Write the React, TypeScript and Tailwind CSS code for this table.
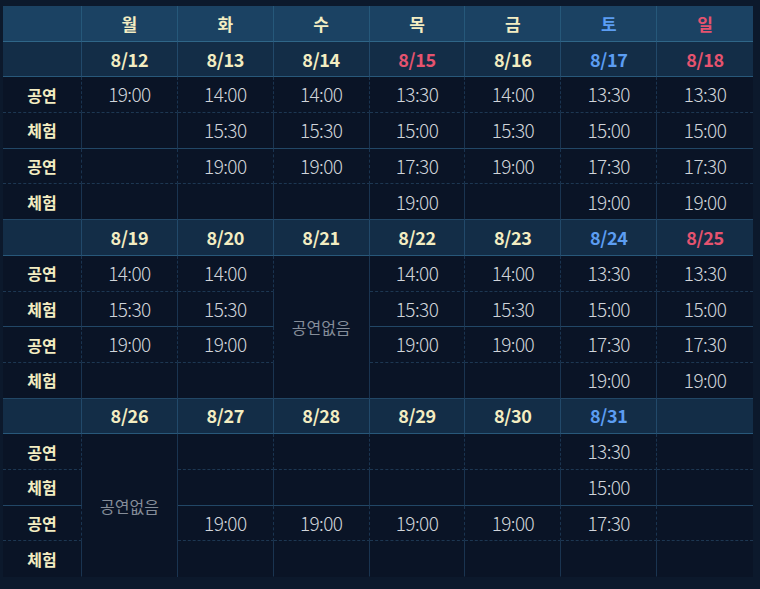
import React from 'react'

type Tone = 'cream' | 'blue' | 'red'

const toneClass: Record<Tone, string> = {
  cream: 'text-[#f3edc2]',
  blue: 'text-[#5c9df2]',
  red: 'text-[#e5536f]',
}

const days: [string, Tone][] = [
  ['월', 'cream'],
  ['화', 'cream'],
  ['수', 'cream'],
  ['목', 'cream'],
  ['금', 'cream'],
  ['토', 'blue'],
  ['일', 'red'],
]

const labels = ['공연', '체험', '공연', '체험']

// closedCol = column merged into one "공연없음" cell over all four rows
interface Block {
  dates: [string, Tone][]
  closedCol?: number
  rows: string[][]
}

const blocks: Block[] = [
  {
    dates: [
      ['8/12', 'cream'],
      ['8/13', 'cream'],
      ['8/14', 'cream'],
      ['8/15', 'red'],
      ['8/16', 'cream'],
      ['8/17', 'blue'],
      ['8/18', 'red'],
    ],
    rows: [
      ['19:00', '14:00', '14:00', '13:30', '14:00', '13:30', '13:30'],
      ['', '15:30', '15:30', '15:00', '15:30', '15:00', '15:00'],
      ['', '19:00', '19:00', '17:30', '19:00', '17:30', '17:30'],
      ['', '', '', '19:00', '', '19:00', '19:00'],
    ],
  },
  {
    dates: [
      ['8/19', 'cream'],
      ['8/20', 'cream'],
      ['8/21', 'cream'],
      ['8/22', 'cream'],
      ['8/23', 'cream'],
      ['8/24', 'blue'],
      ['8/25', 'red'],
    ],
    closedCol: 2,
    rows: [
      ['14:00', '14:00', '', '14:00', '14:00', '13:30', '13:30'],
      ['15:30', '15:30', '', '15:30', '15:30', '15:00', '15:00'],
      ['19:00', '19:00', '', '19:00', '19:00', '17:30', '17:30'],
      ['', '', '', '', '', '19:00', '19:00'],
    ],
  },
  {
    dates: [
      ['8/26', 'cream'],
      ['8/27', 'cream'],
      ['8/28', 'cream'],
      ['8/29', 'cream'],
      ['8/30', 'cream'],
      ['8/31', 'blue'],
      ['', 'cream'],
    ],
    closedCol: 0,
    rows: [
      ['', '', '', '', '', '13:30', ''],
      ['', '', '', '', '', '15:00', ''],
      ['', '19:00', '19:00', '19:00', '19:00', '17:30', ''],
      ['', '', '', '', '', '', ''],
    ],
  },
]

const font = { fontFamily: '"Noto Sans CJK KR", "Noto Sans", sans-serif' }

function rowBorder(r: number, last: boolean) {
  if (last) return 'border-b border-transparent'
  if (r % 2 === 0) return 'border-b border-dashed border-[#1d3752]'
  return 'border-b border-solid border-[#224766]'
}

export default function App() {
  return (
    <div className="w-[760px] h-[589px] bg-[#0c192c] pt-[6px] pl-[3px]" style={font}>
      <div className="grid w-[750px] h-[571px] grid-cols-[79px_repeat(7,minmax(0,1fr))] grid-rows-[repeat(16,minmax(0,1fr))] bg-[#0a1426]">
        {/* day header */}
        <div className="bg-[#1b4263] border-b border-[#2f6688] border-r border-r-[#26587a]" />
        {days.map(([d, tone], i) => (
          <div
            key={d}
            className={`bg-[#1b4263] border-b border-[#2f6688] flex items-center justify-center text-[17px] font-bold ${toneClass[tone]} ${
              i < 6 ? 'border-r border-r-[#26587a]' : ''
            }`}
          >
            {d}
          </div>
        ))}

        {blocks.map((block, b) => (
          <React.Fragment key={b}>
            <div className="bg-[#132d47] border-b border-[#28587a] border-r border-r-[#22496a]" />
            {block.dates.map(([d, tone], i) => (
              <div
                key={'d' + i}
                className={`bg-[#132d47] border-b border-[#28587a] flex items-center justify-center text-[18px] font-bold tracking-[-0.3px] ${toneClass[tone]} ${
                  i < 6 ? 'border-r border-r-[#22496a]' : ''
                }`}
              >
                {d}
              </div>
            ))}
            {block.rows.map((row, r) => {
              const last = b === blocks.length - 1 && r === 3
              return (
                <React.Fragment key={'r' + r}>
                  <div
                    className={`flex items-center justify-center text-[16px] font-bold text-[#f3edc2] border-r border-r-[#1a3450] ${rowBorder(r, last)}`}
                  >
                    {labels[r]}
                  </div>
                  {row.map((t, c) => {
                    if (block.closedCol === c) {
                      if (r !== 0) return null
                      return (
                        <div
                          key={c}
                          className={`row-span-4 flex items-center justify-center text-[16px] text-[#858d99] border-r border-r-[#1a3450] ${
                            b === blocks.length - 1 ? '' : 'border-b border-[#224766]'
                          }`}
                        >
                          공연없음
                        </div>
                      )
                    }
                    return (
                      <div
                        key={c}
                        className={`flex items-center justify-center text-[19px] font-light tracking-[-0.6px] text-[#d0d4da] ${rowBorder(r, last)} ${
                          c < 6 ? 'border-r border-r-[#1a3450]' : ''
                        }`}
                      >
                        {t}
                      </div>
                    )
                  })}
                </React.Fragment>
              )
            })}
          </React.Fragment>
        ))}
      </div>
    </div>
  )
}
